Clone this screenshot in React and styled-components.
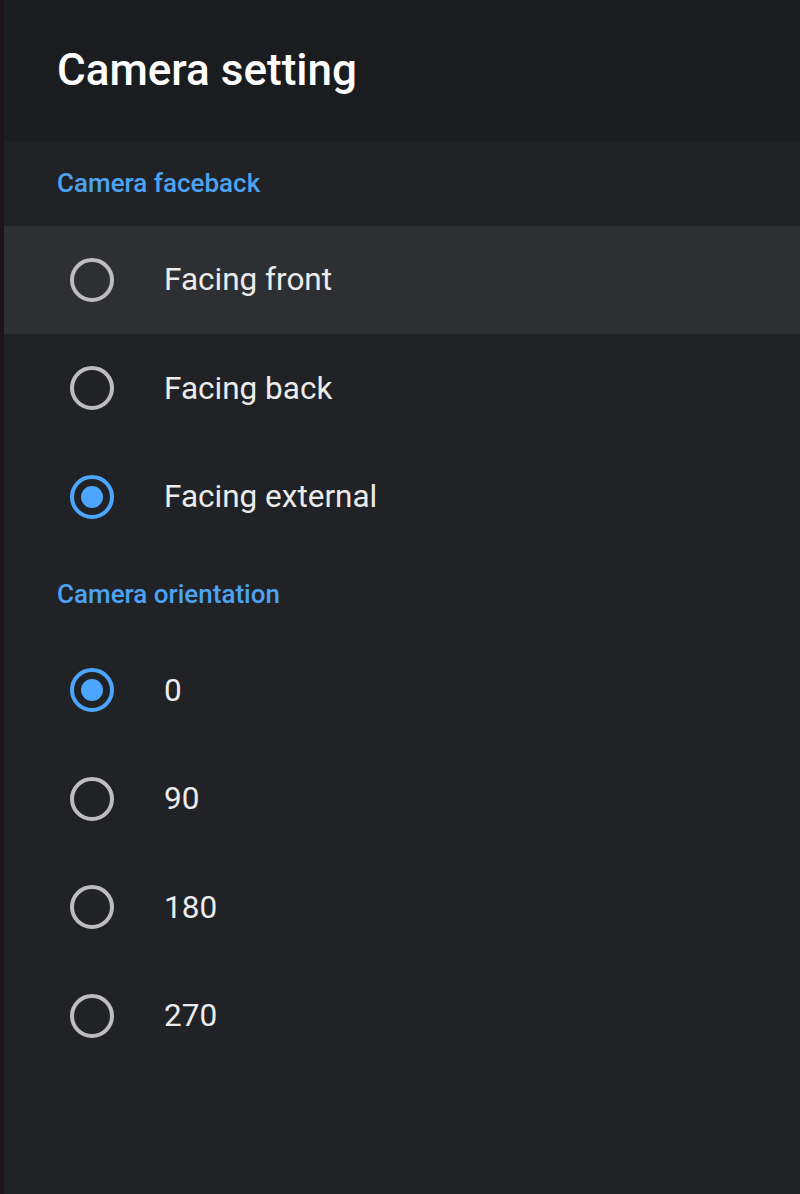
import React from 'react'
import styled, { createGlobalStyle } from 'styled-components'

const GlobalStyle = createGlobalStyle`
  html, body {
    margin: 0;
    padding: 0;
    background: #212226;
    font-family: Roboto, "Noto Sans", sans-serif;
  }
`

const Screen = styled.div`
  display: flex;
  height: 1194px;
  overflow: hidden;
`

const EdgeStrip = styled.div`
  width: 4px;
  flex-shrink: 0;
  background: #1e1418;
`

const Panel = styled.div`
  flex: 1;
  display: flex;
  flex-direction: column;
  background: #212226;
`

const Header = styled.div`
  height: 141px;
  display: flex;
  align-items: center;
  padding-left: 53px;
  background: #1b1c1f;
  box-sizing: border-box;
  flex-shrink: 0;
`

const Title = styled.h1`
  margin: 0;
  font-size: 44px;
  font-weight: 500;
  color: #ffffff;
  padding-bottom: 2px;
`

const SectionTitle = styled.div`
  height: 84.5px;
  display: flex;
  align-items: center;
  padding-left: 53px;
  font-size: 26px;
  font-weight: 500;
  color: #4ba3f2;
  box-sizing: border-box;
  flex-shrink: 0;
`

const Row = styled.div`
  height: 108.6px;
  display: flex;
  align-items: center;
  padding-left: 66px;
  flex-shrink: 0;
  background: ${(p) => (p.$focused ? '#2e2f33' : 'transparent')};
`

const Radio = styled.span`
  width: 44px;
  height: 44px;
  box-sizing: border-box;
  border-radius: 50%;
  border: 4px solid ${(p) => (p.$checked ? '#4ca6ff' : '#bdbdbd')};
  display: flex;
  align-items: center;
  justify-content: center;
  flex-shrink: 0;

  &::after {
    content: '';
    width: 22px;
    height: 22px;
    border-radius: 50%;
    background: #4ca6ff;
    display: ${(p) => (p.$checked ? 'block' : 'none')};
  }
`

const Label = styled.span`
  margin-left: 50px;
  font-size: 31.5px;
  color: #ececec;
`

const sections = [
  {
    title: 'Camera faceback',
    options: ['Facing front', 'Facing back', 'Facing external'],
    selected: 2,
    focused: 0,
  },
  {
    title: 'Camera orientation',
    options: ['0', '90', '180', '270'],
    selected: 0,
    focused: -1,
  },
]

export default function App() {
  return (
    <>
      <GlobalStyle />
      <Screen>
        <EdgeStrip />
        <Panel>
          <Header>
            <Title>Camera setting</Title>
          </Header>
          {sections.map((s) => (
            <React.Fragment key={s.title}>
              <SectionTitle>{s.title}</SectionTitle>
              {s.options.map((o, i) => (
                <Row key={o} $focused={i === s.focused}>
                  <Radio $checked={i === s.selected} />
                  <Label>{o}</Label>
                </Row>
              ))}
            </React.Fragment>
          ))}
        </Panel>
      </Screen>
    </>
  )
}
